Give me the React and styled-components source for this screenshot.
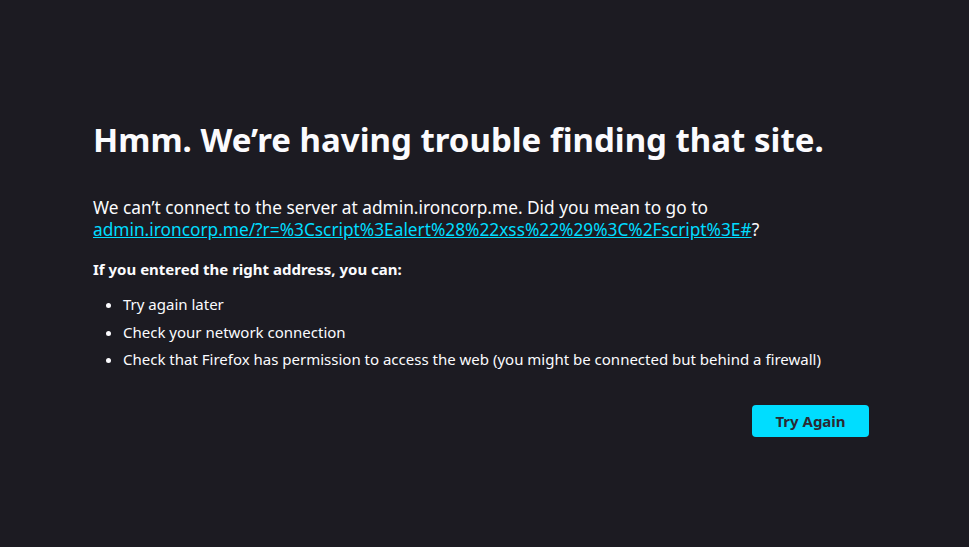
import React from "react"
import styled, { createGlobalStyle } from "styled-components"

const GlobalStyle = createGlobalStyle`
  html, body {
    margin: 0;
    padding: 0;
    background-color: #1c1b22;
  }
  body {
    font-family: "Noto Sans", "Open Sans", sans-serif;
    color: #fbfbfe;
  }
`

const Page = styled.main`
  width: 969px;
  height: 547px;
  box-sizing: border-box;
  padding: 118px 0 0 93px;
`

const Container = styled.div`
  width: 776px;
  display: flex;
  flex-direction: column;
`

const Title = styled.h1`
  margin: 0;
  font-size: 33px;
  font-weight: 700;
  line-height: 44px;
`

const Lead = styled.p`
  margin: 35px 0 0;
  font-size: 17.3px;
  line-height: 22px;
`

const SiteLink = styled.a`
  color: #00ddff;
  text-decoration: underline;
`

const Heading = styled.p`
  margin: 18px 0 0;
  font-size: 15px;
  font-weight: 700;
  line-height: 20px;
`

const List = styled.ul`
  margin: 15px 0 0;
  padding-left: 30px;
  font-size: 15px;
  line-height: 20px;
`

const Item = styled.li`
  margin-bottom: 7.5px;
`

const Actions = styled.div`
  display: flex;
  justify-content: flex-end;
  margin-top: 28px;
`

const Button = styled.button`
  width: 117px;
  height: 32px;
  border: none;
  border-radius: 4px;
  background-color: #00ddff;
  color: #2b2a33;
  font-family: inherit;
  font-size: 15px;
  font-weight: 700;
  cursor: pointer;
`

const App = () => {
  return (
    <>
      <GlobalStyle />
      <Page>
        <Container>
          <Title>Hmm. We’re having trouble finding that site.</Title>
          <Lead>
            We can’t connect to the server at admin.ironcorp.me. Did you mean to go to{" "}
            <SiteLink href="#">
              admin.ironcorp.me/?r=%3Cscript%3Ealert%28%22xss%22%29%3C%2Fscript%3E#
            </SiteLink>
            ?
          </Lead>
          <Heading>If you entered the right address, you can:</Heading>
          <List>
            <Item>Try again later</Item>
            <Item>Check your network connection</Item>
            <Item>
              Check that Firefox has permission to access the web (you might be connected
              but behind a firewall)
            </Item>
          </List>
          <Actions>
            <Button>Try Again</Button>
          </Actions>
        </Container>
      </Page>
    </>
  )
}

export default App
